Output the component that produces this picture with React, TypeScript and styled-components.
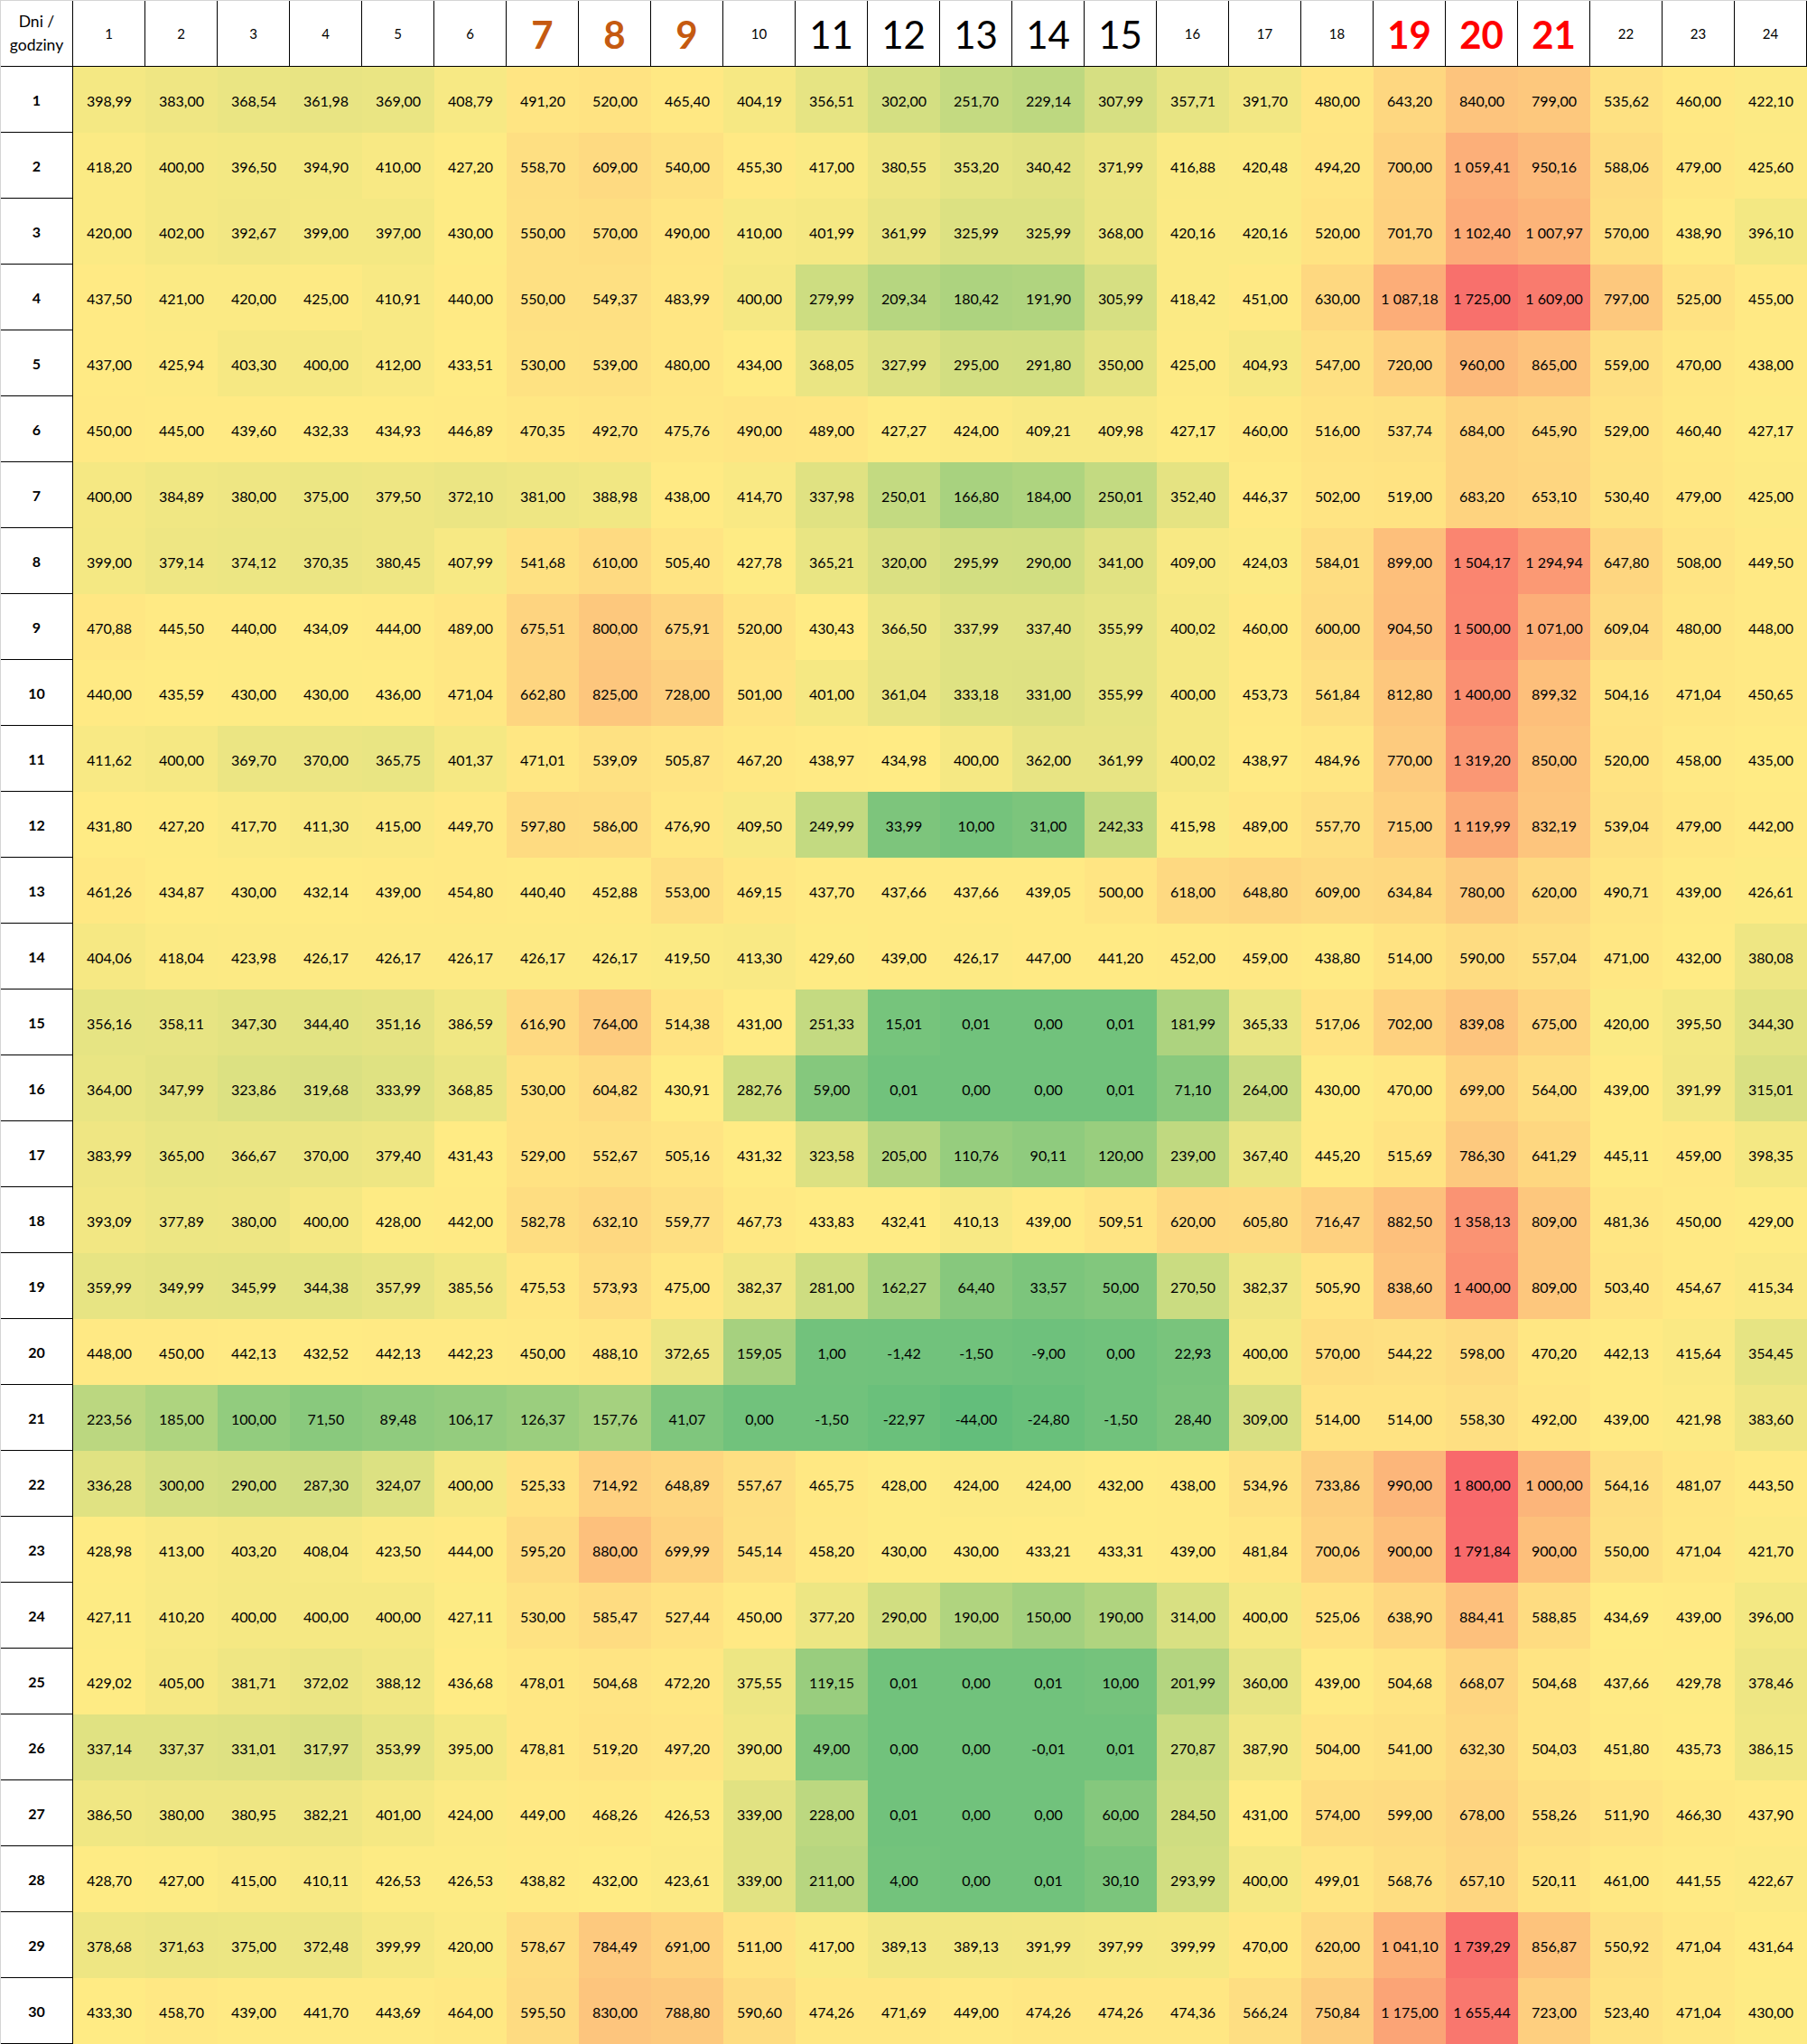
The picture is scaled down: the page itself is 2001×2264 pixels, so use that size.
import React from "react";
import styled, { createGlobalStyle } from "styled-components";

const GlobalStyle = createGlobalStyle`
  html, body { margin: 0; padding: 0; background: #ffffff; }
  body { font-family: Lato, "Open Sans", "DejaVu Sans", sans-serif; color: #000; }
  #root { width: 2001px; }
`;

const RAW = `398.99 383 368.54 361.98 369 408.79 491.2 520 465.4 404.19 356.51 302 251.7 229.14 307.99 357.71 391.7 480 643.2 840 799 535.62 460 422.1
418.2 400 396.5 394.9 410 427.2 558.7 609 540 455.3 417 380.55 353.2 340.42 371.99 416.88 420.48 494.2 700 1059.41 950.16 588.06 479 425.6
420 402 392.67 399 397 430 550 570 490 410 401.99 361.99 325.99 325.99 368 420.16 420.16 520 701.7 1102.4 1007.97 570 438.9 396.1
437.5 421 420 425 410.91 440 550 549.37 483.99 400 279.99 209.34 180.42 191.9 305.99 418.42 451 630 1087.18 1725 1609 797 525 455
437 425.94 403.3 400 412 433.51 530 539 480 434 368.05 327.99 295 291.8 350 425 404.93 547 720 960 865 559 470 438
450 445 439.6 432.33 434.93 446.89 470.35 492.7 475.76 490 489 427.27 424 409.21 409.98 427.17 460 516 537.74 684 645.9 529 460.4 427.17
400 384.89 380 375 379.5 372.1 381 388.98 438 414.7 337.98 250.01 166.8 184 250.01 352.4 446.37 502 519 683.2 653.1 530.4 479 425
399 379.14 374.12 370.35 380.45 407.99 541.68 610 505.4 427.78 365.21 320 295.99 290 341 409 424.03 584.01 899 1504.17 1294.94 647.8 508 449.5
470.88 445.5 440 434.09 444 489 675.51 800 675.91 520 430.43 366.5 337.99 337.4 355.99 400.02 460 600 904.5 1500 1071 609.04 480 448
440 435.59 430 430 436 471.04 662.8 825 728 501 401 361.04 333.18 331 355.99 400 453.73 561.84 812.8 1400 899.32 504.16 471.04 450.65
411.62 400 369.7 370 365.75 401.37 471.01 539.09 505.87 467.2 438.97 434.98 400 362 361.99 400.02 438.97 484.96 770 1319.2 850 520 458 435
431.8 427.2 417.7 411.3 415 449.7 597.8 586 476.9 409.5 249.99 33.99 10 31 242.33 415.98 489 557.7 715 1119.99 832.19 539.04 479 442
461.26 434.87 430 432.14 439 454.8 440.4 452.88 553 469.15 437.7 437.66 437.66 439.05 500 618 648.8 609 634.84 780 620 490.71 439 426.61
404.06 418.04 423.98 426.17 426.17 426.17 426.17 426.17 419.5 413.3 429.6 439 426.17 447 441.2 452 459 438.8 514 590 557.04 471 432 380.08
356.16 358.11 347.3 344.4 351.16 386.59 616.9 764 514.38 431 251.33 15.01 0.01 0 0.01 181.99 365.33 517.06 702 839.08 675 420 395.5 344.3
364 347.99 323.86 319.68 333.99 368.85 530 604.82 430.91 282.76 59 0.01 0 0 0.01 71.1 264 430 470 699 564 439 391.99 315.01
383.99 365 366.67 370 379.4 431.43 529 552.67 505.16 431.32 323.58 205 110.76 90.11 120 239 367.4 445.2 515.69 786.3 641.29 445.11 459 398.35
393.09 377.89 380 400 428 442 582.78 632.1 559.77 467.73 433.83 432.41 410.13 439 509.51 620 605.8 716.47 882.5 1358.13 809 481.36 450 429
359.99 349.99 345.99 344.38 357.99 385.56 475.53 573.93 475 382.37 281 162.27 64.4 33.57 50 270.5 382.37 505.9 838.6 1400 809 503.4 454.67 415.34
448 450 442.13 432.52 442.13 442.23 450 488.1 372.65 159.05 1 -1.42 -1.5 -9 0 22.93 400 570 544.22 598 470.2 442.13 415.64 354.45
223.56 185 100 71.5 89.48 106.17 126.37 157.76 41.07 0 -1.5 -22.97 -44 -24.8 -1.5 28.4 309 514 514 558.3 492 439 421.98 383.6
336.28 300 290 287.3 324.07 400 525.33 714.92 648.89 557.67 465.75 428 424 424 432 438 534.96 733.86 990 1800 1000 564.16 481.07 443.5
428.98 413 403.2 408.04 423.5 444 595.2 880 699.99 545.14 458.2 430 430 433.21 433.31 439 481.84 700.06 900 1791.84 900 550 471.04 421.7
427.11 410.2 400 400 400 427.11 530 585.47 527.44 450 377.2 290 190 150 190 314 400 525.06 638.9 884.41 588.85 434.69 439 396
429.02 405 381.71 372.02 388.12 436.68 478.01 504.68 472.2 375.55 119.15 0.01 0 0.01 10 201.99 360 439 504.68 668.07 504.68 437.66 429.78 378.46
337.14 337.37 331.01 317.97 353.99 395 478.81 519.2 497.2 390 49 0 0 -0.01 0.01 270.87 387.9 504 541 632.3 504.03 451.8 435.73 386.15
386.5 380 380.95 382.21 401 424 449 468.26 426.53 339 228 0.01 0 0 60 284.5 431 574 599 678 558.26 511.9 466.3 437.9
428.7 427 415 410.11 426.53 426.53 438.82 432 423.61 339 211 4 0 0.01 30.1 293.99 400 499.01 568.76 657.1 520.11 461 441.55 422.67
378.68 371.63 375 372.48 399.99 420 578.67 784.49 691 511 417 389.13 389.13 391.99 397.99 399.99 470 620 1041.1 1739.29 856.87 550.92 471.04 431.64
433.3 458.7 439 441.7 443.69 464 595.5 830 788.8 590.6 474.26 471.69 449 474.26 474.26 474.36 566.24 750.84 1175 1655.44 723 523.4 471.04 430`;

const DATA: number[][] = RAW.trim()
  .split("\n")
  .map((line) => line.trim().split(/\s+/).map(Number));

const ALL = DATA.flat().slice().sort((a, b) => a - b);
const MIN_V = ALL[0];
const MAX_V = ALL[ALL.length - 1];
const MID_RANK = 0.5 * (ALL.length - 1);
const MID_V =
  ALL[Math.floor(MID_RANK)] +
  (ALL[Math.ceil(MID_RANK)] - ALL[Math.floor(MID_RANK)]) * (MID_RANK - Math.floor(MID_RANK));

const C_MIN = [99, 190, 123];
const C_MID = [255, 235, 132];
const C_MAX = [248, 105, 107];

function mix(a: number[], b: number[], t: number): string {
  const c = a.map((v, i) => Math.round(v + (b[i] - v) * t));
  return `rgb(${c[0]}, ${c[1]}, ${c[2]})`;
}

function scaleColor(v: number): string {
  if (v <= MID_V) {
    const t = MID_V === MIN_V ? 1 : (v - MIN_V) / (MID_V - MIN_V);
    return mix(C_MIN, C_MID, t);
  }
  const t = MAX_V === MID_V ? 1 : (v - MID_V) / (MAX_V - MID_V);
  return mix(C_MID, C_MAX, t);
}

function fmt(v: number): string {
  const neg = v < 0;
  const [i, d] = Math.abs(v).toFixed(2).split(".");
  const grouped = i.replace(/\B(?=(\d{3})+(?!\d))/g, "\u00a0");
  return (neg ? "-" : "") + grouped + "," + d;
}

type HeadKind = "small" | "big" | "morning" | "evening";

function headKind(h: number): HeadKind {
  if (h >= 7 && h <= 9) return "morning";
  if (h >= 11 && h <= 15) return "big";
  if (h >= 19 && h <= 21) return "evening";
  return "small";
}

const Sheet = styled.div`
  display: grid;
  grid-template-columns: repeat(25, 80px);
  grid-auto-rows: 73px;
  width: 2001px;
  box-sizing: border-box;
  border-top: 1px solid #d4d4d4;
  border-left: 1px solid #d4d4d4;
`;

const BorderedCell = styled.div`
  box-sizing: border-box;
  border-right: 1px solid #000;
  border-bottom: 1px solid #000;
  background: #fff;
  display: flex;
  align-items: center;
  justify-content: center;
  text-align: center;
  font-family: Lato, "Open Sans", sans-serif;
`;

const CornerCell = styled(BorderedCell)`
  font-size: 17.5px;
  line-height: 26px;
  flex-direction: column;
`;

const HeadCell = styled(BorderedCell)<{ $kind: HeadKind }>`
  font-size: ${(p) => (p.$kind === "small" ? "15px" : "42px")};
  font-weight: ${(p) => (p.$kind === "morning" || p.$kind === "evening" ? 700 : 400)};
  color: ${(p) =>
    p.$kind === "morning" ? "#c55a11" : p.$kind === "evening" ? "#ff0000" : "#000"};
  line-height: 1;
  padding-top: 1px;
`;

const DayCell = styled(BorderedCell)`
  font-size: 16px;
  font-weight: 700;
  padding-top: 1px;
`;

const ValueCell = styled.div`
  box-sizing: border-box;
  display: flex;
  align-items: center;
  justify-content: center;
  padding-top: 1px;
  font-family: Lato, "Open Sans", sans-serif;
  font-size: 16px;
  color: #000;
  white-space: nowrap;
`;

const HOURS = Array.from({ length: 24 }, (_, i) => i + 1);

export default function App() {
  return (
    <>
      <GlobalStyle />
      <Sheet>
        <CornerCell>
          <span>Dni /</span>
          <span>godziny</span>
        </CornerCell>
        {HOURS.map((h) => (
          <HeadCell key={`h${h}`} $kind={headKind(h)}>
            {h}
          </HeadCell>
        ))}
        {DATA.map((row, r) => (
          <React.Fragment key={`r${r}`}>
            <DayCell>{r + 1}</DayCell>
            {row.map((v, c) => (
              <ValueCell key={`c${r}-${c}`} style={{ background: scaleColor(v) }}>
                {fmt(v)}
              </ValueCell>
            ))}
          </React.Fragment>
        ))}
      </Sheet>
    </>
  );
}
